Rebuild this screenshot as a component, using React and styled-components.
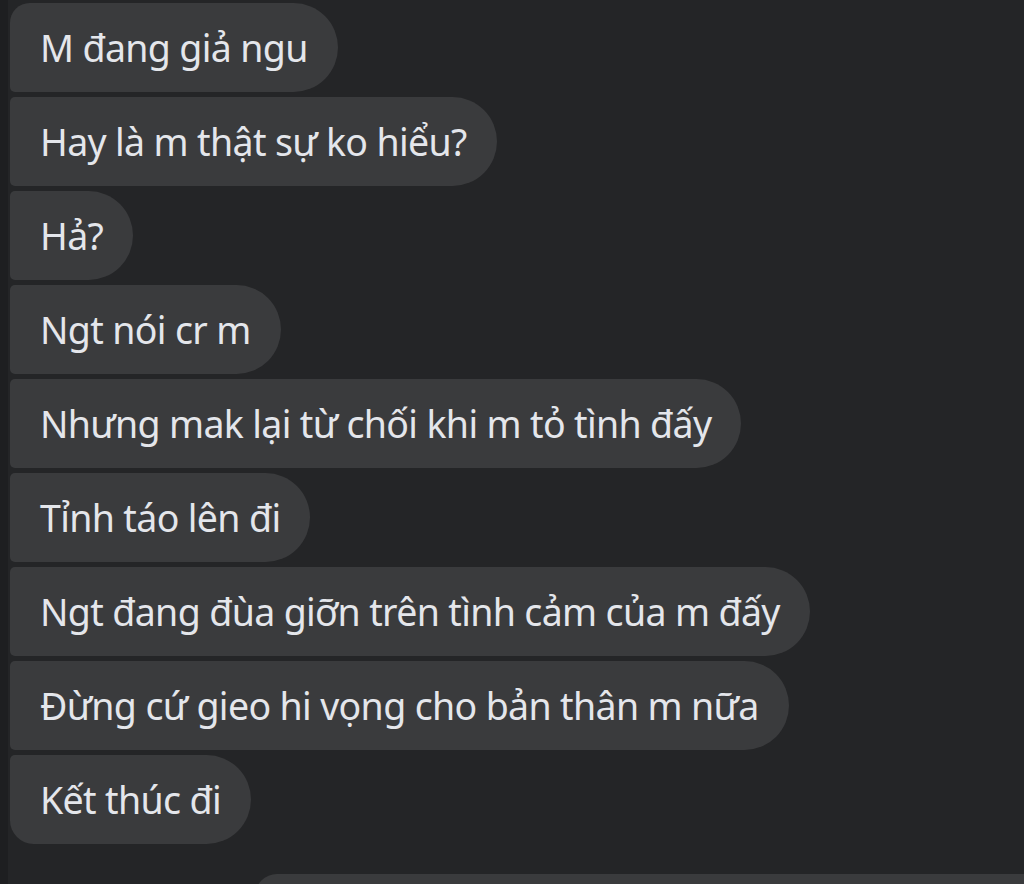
import styled, { createGlobalStyle } from "styled-components";

const GlobalStyle = createGlobalStyle`
  html, body {
    margin: 0;
    padding: 0;
    background: #242527;
  }
`;

const Page = styled.div`
  width: 1024px;
  height: 884px;
  overflow: hidden;
  background: #242527;
  border-left: 8px solid #1e1f21;
  box-sizing: border-box;
  font-family: "Noto Sans", "Open Sans", sans-serif;
`;

const Thread = styled.div`
  display: flex;
  flex-direction: column;
  align-items: flex-start;
  gap: 5px;
  padding: 3px 0 0 2px;
`;

const Bubble = styled.div`
  background: #3a3b3d;
  color: #e4e6eb;
  font-size: 37.5px;
  letter-spacing: -0.65px;
  line-height: 49px;
  padding: 20px 30px 20px 30px;
  white-space: nowrap;
  border-radius: ${({ $pos }) =>
    $pos === "first"
      ? "20px 45px 45px 5px"
      : $pos === "last"
      ? "5px 45px 45px 24px"
      : "5px 45px 45px 5px"};
`;

const Outgoing = styled.div`
  align-self: flex-start;
  margin: 25px 0 0 245px;
  width: 900px;
  height: 60px;
  background: #3a3b3d;
  border-radius: 22px 0 0 0;
`;

const messages = [
  "M đang giả ngu",
  "Hay là m thật sự ko hiểu?",
  "Hả?",
  "Ngt nói cr m",
  "Nhưng mak lại từ chối khi m tỏ tình đấy",
  "Tỉnh táo lên đi",
  "Ngt đang đùa giỡn trên tình cảm của m đấy",
  "Đừng cứ gieo hi vọng cho bản thân m nữa",
  "Kết thúc đi",
];

const App = () => {
  return (
    <>
      <GlobalStyle />
      <Page>
        <Thread>
          {messages.map((text, i) => (
            <Bubble
              key={i}
              $pos={i === 0 ? "first" : i === messages.length - 1 ? "last" : "middle"}
            >
              {text}
            </Bubble>
          ))}
          <Outgoing />
        </Thread>
      </Page>
    </>
  );
};

export default App;
